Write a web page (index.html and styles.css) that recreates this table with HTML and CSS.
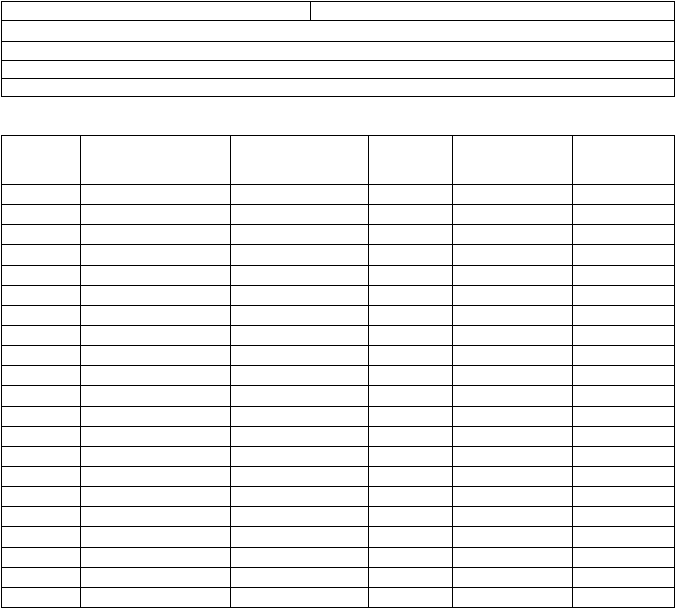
FILE: index.html
```html
<!DOCTYPE html>
<html>
<head>
<meta charset="utf-8">
<link rel="stylesheet" href="styles.css">
</head>
<body>
<div class="sheet">
  <div class="info">
    <div class="c"></div><div class="c"></div>
    <div class="c wide"></div>
    <div class="c wide"></div>
    <div class="c wide"></div>
    <div class="c wide"></div>
  </div>
  <div class="log">
    <div class="c"></div><div class="c"></div><div class="c"></div><div class="c"></div><div class="c"></div><div class="c"></div>
    <div class="c"></div><div class="c"></div><div class="c"></div><div class="c"></div><div class="c"></div><div class="c"></div>
    <div class="c"></div><div class="c"></div><div class="c"></div><div class="c"></div><div class="c"></div><div class="c"></div>
    <div class="c"></div><div class="c"></div><div class="c"></div><div class="c"></div><div class="c"></div><div class="c"></div>
    <div class="c"></div><div class="c"></div><div class="c"></div><div class="c"></div><div class="c"></div><div class="c"></div>
    <div class="c"></div><div class="c"></div><div class="c"></div><div class="c"></div><div class="c"></div><div class="c"></div>
    <div class="c"></div><div class="c"></div><div class="c"></div><div class="c"></div><div class="c"></div><div class="c"></div>
    <div class="c"></div><div class="c"></div><div class="c"></div><div class="c"></div><div class="c"></div><div class="c"></div>
    <div class="c"></div><div class="c"></div><div class="c"></div><div class="c"></div><div class="c"></div><div class="c"></div>
    <div class="c"></div><div class="c"></div><div class="c"></div><div class="c"></div><div class="c"></div><div class="c"></div>
    <div class="c"></div><div class="c"></div><div class="c"></div><div class="c"></div><div class="c"></div><div class="c"></div>
    <div class="c"></div><div class="c"></div><div class="c"></div><div class="c"></div><div class="c"></div><div class="c"></div>
    <div class="c"></div><div class="c"></div><div class="c"></div><div class="c"></div><div class="c"></div><div class="c"></div>
    <div class="c"></div><div class="c"></div><div class="c"></div><div class="c"></div><div class="c"></div><div class="c"></div>
    <div class="c"></div><div class="c"></div><div class="c"></div><div class="c"></div><div class="c"></div><div class="c"></div>
    <div class="c"></div><div class="c"></div><div class="c"></div><div class="c"></div><div class="c"></div><div class="c"></div>
    <div class="c"></div><div class="c"></div><div class="c"></div><div class="c"></div><div class="c"></div><div class="c"></div>
    <div class="c"></div><div class="c"></div><div class="c"></div><div class="c"></div><div class="c"></div><div class="c"></div>
    <div class="c"></div><div class="c"></div><div class="c"></div><div class="c"></div><div class="c"></div><div class="c"></div>
    <div class="c"></div><div class="c"></div><div class="c"></div><div class="c"></div><div class="c"></div><div class="c"></div>
    <div class="c"></div><div class="c"></div><div class="c"></div><div class="c"></div><div class="c"></div><div class="c"></div>
    <div class="c"></div><div class="c"></div><div class="c"></div><div class="c"></div><div class="c"></div><div class="c"></div>
  </div>
</div>
</body>
</html>
```
FILE: styles.css
```css
html, body {
  margin: 0;
  padding: 0;
  background: #fff;
  font-family: "Liberation Sans", Arial, sans-serif;
}
.sheet {
  padding: 1px 0 0 1px;
}
.info, .log {
  display: grid;
  gap: 1px;
  padding: 1px;
  background: #000;
  width: max-content;
}
.info {
  grid-template-columns: 308px 363px;
  grid-template-rows: 18px 20px 18px 17px 17px;
}
.log {
  margin-top: 38px;
  grid-template-columns: 78px 149px 137px 83px 119px 101px;
  grid-template-rows: 48px repeat(3, 19px) 20px repeat(6, 19px) 20px repeat(6, 19px) 20px repeat(3, 19px);
}
.c {
  background: #fff;
}
.wide {
  grid-column: 1 / -1;
}
```
